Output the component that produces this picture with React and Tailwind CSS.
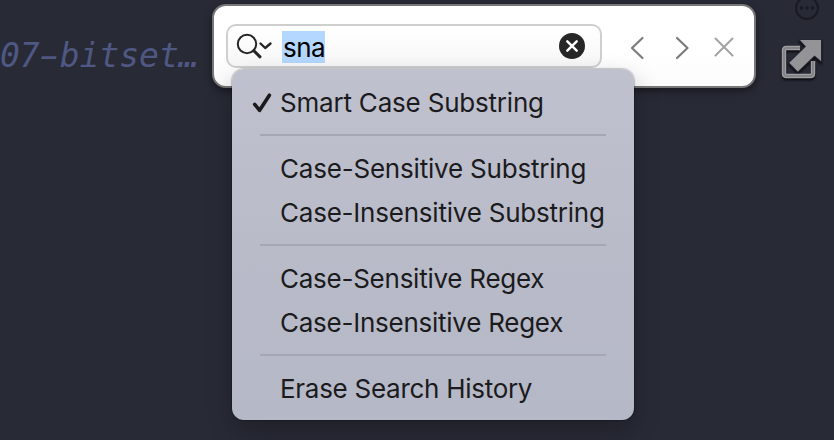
const ITEM =
  "h-[44px] flex items-center whitespace-nowrap text-[26px] leading-[44px]";

function Item({ children, checked, spacing }) {
  return (
    <div role="menuitem" className={ITEM}>
      <span className="w-[48px] shrink-0 pl-[20px]">
        {checked && (
          <svg width="21" height="20" viewBox="0 0 21 20" fill="none">
            <path d="M2.7 11.3L7.6 17.3L17.4 2.2" stroke="#1b1b1d" strokeWidth="3.6" strokeLinecap="round" strokeLinejoin="round" />
          </svg>
        )}
      </span>
      <span className={spacing}>{children}</span>
    </div>
  );
}

function Separator() {
  return <div className="mx-[28px] mt-[9px] mb-[11px] h-[2px] bg-[#a5a7b5]" />;
}

function SearchMenu() {
  return (
    <div
      role="menu"
      className="absolute left-[232px] top-[69px] w-[402px] h-[351px] rounded-[12px] pt-[12px] text-[#1b1b1d] bg-linear-to-b from-[#c0c1ce] via-[#b9bbc9] to-[#b5b8c6] shadow-[0_0_1px_1px_rgba(0,0,0,0.2),0_10px_24px_rgba(0,0,0,0.25)]"
    >
      <Item checked spacing="tracking-[-0.2px]">Smart Case Substring</Item>
      <Separator />
      <Item spacing="tracking-[-0.2px]">Case-Sensitive Substring</Item>
      <Item spacing="tracking-[-0.22px]">Case-Insensitive Substring</Item>
      <Separator />
      <Item spacing="tracking-[-0.25px]">Case-Sensitive Regex</Item>
      <Item spacing="tracking-[-0.25px]">Case-Insensitive Regex</Item>
      <Separator />
      <Item spacing="tracking-[-0.28px]">Erase Search History</Item>
    </div>
  );
}

function SearchField() {
  return (
    <div className="mt-[18px] flex h-[44px] w-[376px] items-center rounded-[10px] border-2 border-[#cfcfcf] bg-linear-to-b from-white to-[#f7f7f7]">
      <svg className="ml-[8px] shrink-0" width="40" height="32" viewBox="0 0 40 32" fill="none" stroke="#262626" strokeLinecap="round" strokeLinejoin="round">
        <circle cx="11" cy="14" r="9.2" strokeWidth="2" />
        <path d="M17.7 20.7L24 26.8" strokeWidth="3" />
        <path d="M24.5 13.5L29.2 18L34.5 13.5" strokeWidth="2.4" />
      </svg>
      <span className="mt-px ml-[6px] h-[32px] w-[43px] bg-[#b3d7ff] pl-px text-[26px] leading-[33px] tracking-[-0.5px] text-black">sna</span>
      <svg className="ml-auto mr-[15px]" width="26" height="26" viewBox="0 0 26 26">
        <circle cx="13" cy="13" r="13" fill="#262626" />
        <path d="M8.3 8.3L17.7 17.7M17.7 8.3L8.3 17.7" stroke="white" strokeWidth="2.4" strokeLinecap="round" />
      </svg>
    </div>
  );
}

export default function App() {
  return (
    <div className="relative flex h-[440px] w-[834px] overflow-hidden bg-[#282a36] font-['Inter','Liberation_Sans',sans-serif]">
      <div className="w-[212px] shrink-0 pt-[36px] font-['DejaVu_Sans_Mono',monospace] text-[33px] leading-[40px] italic text-[#4f5883] whitespace-nowrap">
        07<span className="inline-block scale-x-[1.75]">-</span>bitset…
      </div>
      <div className="mt-[4px] flex h-[84px] w-[544px] shrink-0 rounded-[14px] border-2 border-[#777777] bg-linear-to-b from-white from-60% to-[#fbfbfb] pl-[12px] shadow-[0_3px_8px_rgba(0,0,0,0.45)]">
        <SearchField />
        <svg className="mt-[24px] ml-[22px]" width="120" height="36" viewBox="0 0 120 36" fill="none" strokeLinecap="round" strokeLinejoin="round">
          <path d="M18.500 8L8 18L18.500 28M53 8L63.5 18L53 28" stroke="#7c7c7c" strokeWidth="2.2" />
          <path d="M91.5 8.5L108.5 25.5M108.5 8.5L91.5 25.5" stroke="#a3a3a3" strokeWidth="2" />
        </svg>
      </div>
      <svg className="ml-[18px]" width="60" height="100" viewBox="774 0 60 100" fill="none">
        <circle cx="807" cy="8" r="11" stroke="#191a22" strokeWidth="2" />
        <g fill="#191a22">
          <circle cx="801.5" cy="8" r="1.8" />
          <circle cx="807" cy="8" r="1.8" />
          <circle cx="812.5" cy="8" r="1.8" />
        </g>
        <g className="drop-shadow-[0_2px_1px_rgba(0,0,0,0.75)]">
          <path d="M800 48H786.5Q784 48 784 50.5V73.500Q784 76 786.5 76H810.500Q813 76 813 73.500V61" stroke="#a0a0a4" strokeWidth="4.4" />
          <path d="M800 48H786.5Q784 48 784 50.5V73.500Q784 76 786.5 76H810.500Q813 76 813 73.500V61" stroke="#838387" strokeWidth="2" />
          <path d="M800 40H821V61L814.500 55.500L797.800 71.500L789.300 62.800L806 46.500Z" fill="#949498" stroke="#24252f" strokeWidth="2" paintOrder="stroke" />
        </g>
      </svg>
      <SearchMenu />
    </div>
  );
}
